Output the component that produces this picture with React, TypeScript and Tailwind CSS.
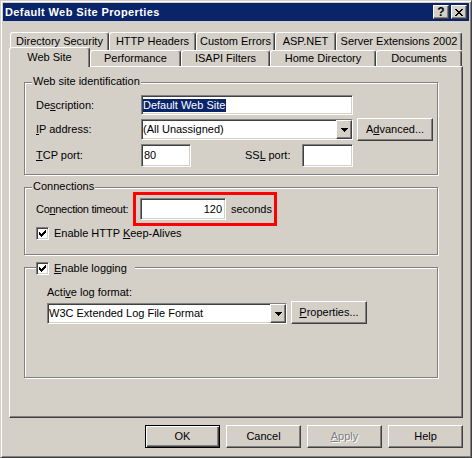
import type { ReactNode } from "react";

// classic 3D edges
const raised =
  "border border-t-white border-l-white border-r-[#404040] border-b-[#404040] shadow-[inset_-1px_-1px_0_#808080] bg-[#d4d0c8]";
const sunken =
  "border border-t-[#808080] border-l-[#808080] border-r-white border-b-white shadow-[inset_1px_1px_0_#404040,inset_-1px_-1px_0_#d4d0c8] bg-white";

function CheckMark() {
  return (
    <svg width="7" height="7" viewBox="0 0 7 7" shapeRendering="crispEdges">
      <path
        d="M0 2h1v3h-1zM1 3h1v3h-1zM2 4h1v3h-1zM3 3h1v3h-1zM4 2h1v3h-1zM5 1h1v3h-1zM6 0h1v3h-1z"
        fill="#000"
      />
    </svg>
  );
}

function Checkbox() {
  return (
    <div className={`${sunken} w-[13px] h-[13px] shrink-0 flex items-center justify-center`}>
      <CheckMark />
    </div>
  );
}

function DropArrow() {
  return (
    <div className={`${raised} w-[16px] h-full flex items-center justify-center`}>
      <svg width="7" height="4" viewBox="0 0 7 4" shapeRendering="crispEdges">
        <path d="M0 0h7l-3.5 4z" fill="#000" />
      </svg>
    </div>
  );
}

function Combo({ value, w, h }: { value: string; w: string; h: string }) {
  return (
    <div className={`${sunken} ${w} ${h} flex items-center justify-between pl-[1px]`}>
      <span className="leading-[13px] whitespace-nowrap">{value}</span>
      <DropArrow />
    </div>
  );
}

function Button({ children, w = "w-[75px]", disabled = false }: { children: ReactNode; w?: string; disabled?: boolean }) {
  return (
    <div
      className={`${raised} ${w} h-[23px] flex items-center justify-center leading-[13px] whitespace-nowrap ${
        disabled ? "text-[#808080] [text-shadow:1px_1px_0_#fff]" : ""
      }`}
    >
      {children}
    </div>
  );
}

function GroupBox({ title, h, className = "", children }: { title: ReactNode; h: string; className?: string; children: ReactNode }) {
  return (
    <div
      className={`relative w-[414px] ${h} border border-[#808080] shadow-[inset_1px_1px_0_#fff,1px_1px_0_#fff] ${className}`}
    >
      {title}
      {children}
    </div>
  );
}

function Legend({ children }: { children: ReactNode }) {
  return (
    <span className="absolute left-[7px] -top-[8px] px-[1px] bg-[#d4d0c8] leading-[13px] whitespace-nowrap">{children}</span>
  );
}

function Label({ w, className = "", children }: { w: string; className?: string; children: ReactNode }) {
  return <span className={`${w} shrink-0 leading-[13px] whitespace-nowrap ${className}`}>{children}</span>;
}

function Tab({ label, w, selected = false }: { label: string; w: string; selected?: boolean }) {
  return (
    <div
      className={`${w} ${
        selected ? "h-[20px] -mt-[3px] relative z-10 bg-[#d4d0c8]" : "h-full"
      } shrink-0 flex items-center justify-center border-l border-t border-r border-l-white border-t-white border-r-[#404040] rounded-t-[3px] shadow-[inset_-1px_0_0_#808080] leading-[13px] whitespace-nowrap`}
    >
      {label}
    </div>
  );
}

export default function App() {
  return (
    <div className="w-[472px] h-[458px] bg-[#d4d0c8] border border-[#d4d0c8] border-r-[#404040] border-b-[#404040] shadow-[inset_1px_1px_0_#fff,inset_-1px_-1px_0_#808080] p-[2px] flex flex-col font-['Liberation_Sans',Arial,sans-serif] text-[11px] text-black select-none">
      {/* caption */}
      <div className="h-[18px] shrink-0 bg-[#0a246a] flex items-center justify-between pl-[2px] pr-[2px]">
        <span className="text-white font-bold leading-[13px] tracking-[0.4px]">Default Web Site Properties</span>
        <div className="flex gap-[2px]">
          <div className={`${raised} w-[16px] h-[14px] flex items-center justify-center font-bold text-[12px] leading-[12px]`}>?</div>
          <div className={`${raised} w-[16px] h-[14px] flex items-center justify-center`}>
            <svg width="8" height="7" viewBox="0 0 8 7" shapeRendering="crispEdges">
              <path
                d="M0 0h2v1h-2zM6 0h2v1h-2zM1 1h2v1h-2zM5 1h2v1h-2zM2 2h4v1h-4zM3 3h2v1h-2zM2 4h4v1h-4zM1 5h2v1h-2zM5 5h2v1h-2zM0 6h2v1h-2zM6 6h2v1h-2z"
                fill="#000"
              />
            </svg>
          </div>
        </div>
      </div>

      {/* tab strip, two rows */}
      <div className="mt-[11px] ml-[7px] h-[18px] flex">
        <Tab label="Directory Security" w="w-[99px]" />
        <Tab label="HTTP Headers" w="w-[87px]" />
        <Tab label="Custom Errors" w="w-[79px]" />
        <Tab label="ASP.NET" w="w-[61px]" />
        <Tab label="Server Extensions 2002" w="w-[126px]" />
      </div>
      <div className="ml-[6px] h-[16px] flex items-start">
        <Tab label="Web Site" w="w-[81px]" selected />
        <Tab label="Performance" w="w-[91px]" />
        <Tab label="ISAPI Filters" w="w-[89px]" />
        <Tab label="Home Directory" w="w-[106px]" />
        <Tab label="Documents" w="w-[86px]" />
      </div>

      {/* page */}
      <div className="ml-[6px] w-[454px] h-[352px] shrink-0 border border-t-white border-l-white border-r-[#404040] border-b-[#404040] shadow-[inset_-1px_-1px_0_#808080] pl-[14px] pt-[15px] flex flex-col">
        <GroupBox title={<Legend>Web site identification</Legend>} h="h-[93px]" className="pt-[12px] pl-[11px] flex flex-col gap-[4px]">
          <div className="h-[20px] flex items-center">
            <Label w="w-[105px]">
              De<u>s</u>cription:
            </Label>
            <div className={`${sunken} w-[212px] h-[20px] flex items-center pl-[1px]`}>
              <span className="bg-[#0a246a] text-white leading-[13px] pr-[1px] whitespace-nowrap">Default Web Site</span>
            </div>
          </div>
          <div className="h-[21px] flex items-center">
            <Label w="w-[105px]">
              <u>I</u>P address:
            </Label>
            <Combo value="(All Unassigned)" w="w-[212px]" h="h-[21px]" />
            <div className="ml-[4px]">
              <Button w="w-[76px]">
                <span>
                  A<u>d</u>vanced...
                </span>
              </Button>
            </div>
          </div>
          <div className="h-[23px] flex items-center">
            <Label w="w-[105px]">
              <u>T</u>CP port:
            </Label>
            <div className={`${sunken} w-[50px] h-[23px] flex items-center pl-[2px] leading-[13px]`}>80</div>
            <Label w="w-[57px]" className="ml-[54px]">
              SS<u>L</u> port:
            </Label>
            <div className={`${sunken} w-[51px] h-[23px]`} />
          </div>
        </GroupBox>

        <GroupBox title={<Legend>Connections</Legend>} h="h-[68px]" className="mt-[12px] pt-[4px] pl-[11px] flex flex-col">
          <div className="flex items-center">
            <Label w="w-[97px]" className="tracking-[-0.3px]">
              Co<u>n</u>nection timeout:
            </Label>
            <div className="border-[3px] border-[#ff0000] pl-[4px] pr-[2px] py-[3px] flex items-center gap-[5px]">
              <div className={`${sunken} w-[86px] h-[22px] flex items-center justify-end pr-[3px] leading-[13px]`}>120</div>
              <span className="leading-[13px]">seconds</span>
            </div>
          </div>
          <div className="mt-[1px] h-[13px] flex items-center gap-[5px]">
            <Checkbox />
            <span className="leading-[13px] whitespace-nowrap">
              Enable HTTP <u>K</u>eep-Alives
            </span>
          </div>
        </GroupBox>

        <GroupBox
          title={
            <div className="absolute left-[11px] -top-[6px] pr-[8px] h-[13px] bg-[#d4d0c8] flex items-center gap-[5px]">
              <Checkbox />
              <span className="leading-[13px] whitespace-nowrap">
                <u>E</u>nable logging
              </span>
            </div>
          }
          h="h-[111px]"
          className="mt-[12px] pt-[18px] pl-[22px] flex flex-col"
        >
          <span className="leading-[13px] whitespace-nowrap">
            Acti<u>v</u>e log format:
          </span>
          <div className="mt-[4px] flex items-start">
            <Combo value="W3C Extended Log File Format" w="w-[240px]" h="h-[21px]" />
            <div className="ml-[4px] -mt-[2px]">
              <Button w="w-[76px]">
                <span>
                  <u>P</u>roperties...
                </span>
              </Button>
            </div>
          </div>
        </GroupBox>
      </div>

      {/* dialog buttons */}
      <div className="mt-[7px] mr-[6px] flex justify-end gap-[6px]">
        <div className="w-[75px] h-[23px] border border-black shadow-[inset_1px_1px_0_#fff,inset_-1px_-1px_0_#404040,inset_-2px_-2px_0_#808080] flex items-center justify-center leading-[13px]">
          OK
        </div>
        <Button>Cancel</Button>
        <Button disabled>
          <span>
            <u>A</u>pply
          </span>
        </Button>
        <Button>Help</Button>
      </div>
    </div>
  );
}
